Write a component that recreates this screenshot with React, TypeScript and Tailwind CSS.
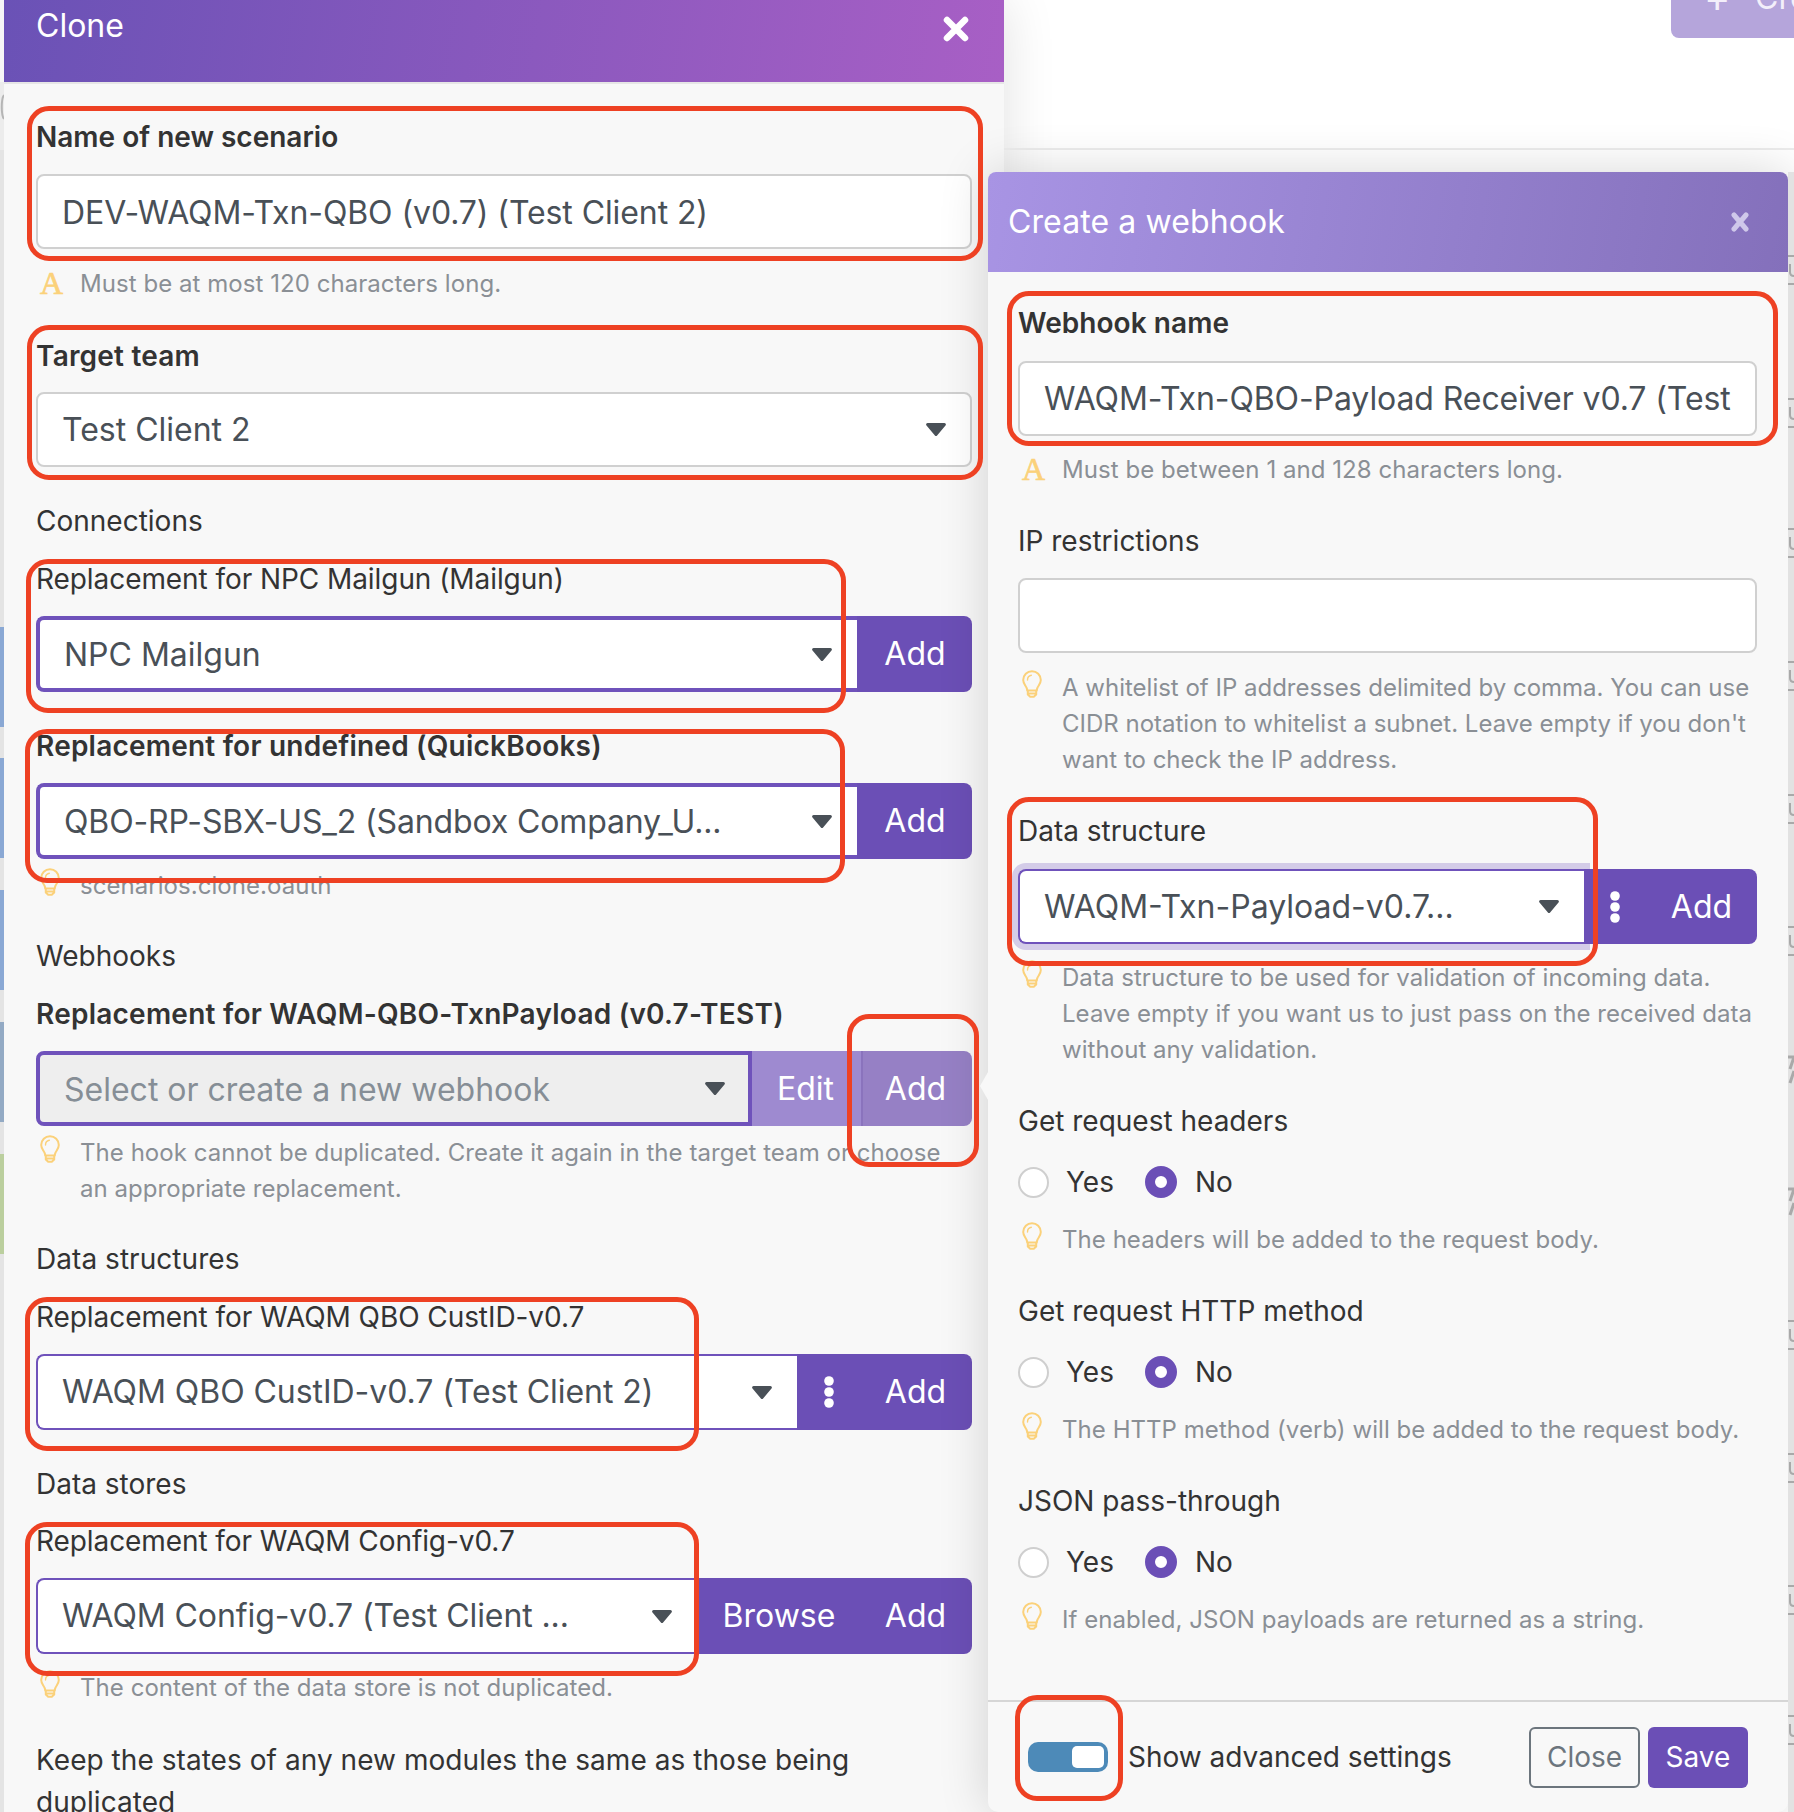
import React from "react";

const Caret = () => (
  <svg width="20" height="13" viewBox="0 0 20 13" className="shrink-0 text-[#495057]">
    <path fill="currentColor" d="M1.6 0h16.8c1.3 0 2 1.6 1.1 2.5l-8.4 9.9c-.6.7-1.6.7-2.2 0L.5 2.500C-.4 1.600.3 0 1.600 0z" />
  </svg>
);

const Dots = () => (
  <svg width="10" height="32" viewBox="0 0 10 32" className="text-white">
    <circle cx="5" cy="5" r="4.800" fill="currentColor" />
    <circle cx="5" cy="16" r="4.800" fill="currentColor" />
    <circle cx="5" cy="27" r="4.800" fill="currentColor" />
  </svg>
);

const Bulb = () => (
  <svg width="20" height="28" viewBox="0 0 20 28" fill="none" stroke="#fbd17a" strokeWidth="2" strokeLinejoin="round" strokeLinecap="round" className="ml-[4px] shrink-0">
    <path d="M10 1.200a8.800 8.800 0 0 0-8.800 8.800c0 3.600 2.400 5.400 3.400 7.900.4 1 .6 1.600.6 2.600h9.600c0-1 .2-1.600.6-2.600 1-2.500 3.400-4.300 3.400-7.900A8.800 8.800 0 0 0 10 1.200z" />
    <path d="M5.800 20.800v3.800l2.400 2.200h3.600l2.400-2.200v-3.800M5.800 23.500h8.400" />
    <path d="M5.500 10c0-2.600 1.700-4.300 3.800-4.700" strokeWidth="1.400" />
  </svg>
);

const Warn = () => (
  <span className="-mt-[1px] ml-[4px] w-[24px] shrink-0 font-['Liberation_Serif',serif] text-[32px] leading-[36px] text-[#fbd17a] [-webkit-text-stroke:0.7px_#fbd17a]">A</span>
);

const Hint = ({ warn, className, children }: { warn?: boolean; className: string; children: React.ReactNode }) => (
  <div className={`flex text-[24px] leading-[36px] tracking-[0.05px] text-[#8a8f95] ${className}`}>
    <div className="flex w-[44px] shrink-0 items-start">{warn ? <Warn /> : <Bulb />}</div>
    <div>{children}</div>
  </div>
);

const Label = ({ bold, className, children }: { bold?: boolean; className: string; children: React.ReactNode }) => (
  <div className={`text-[28px] leading-[42px] text-[#333] ${bold ? "font-semibold" : "font-normal"} ${className}`}>{children}</div>
);

const Field = ({ value, className }: { value: string; className: string }) => (
  <input
    readOnly
    value={value}
    className={`block h-[75px] w-full rounded-[8px] border-2 border-[#d0d0d0] bg-white pl-[24px] text-[32px] text-[#495057] outline-none ${className}`}
  />
);

const Btn = ({ className, children }: { className: string; children: React.ReactNode }) => (
  <div className={`flex h-full shrink-0 items-center justify-center text-[32px] text-white ${className}`}>{children}</div>
);

const Select = ({ text, className, textClass, caretClass }: { text: string; className: string; textClass: string; caretClass: string }) => (
  <div
    className={`flex h-full min-w-0 flex-1 items-center justify-between rounded-l-[8px] border-[#6f52bb] text-[32px] whitespace-nowrap ${className}`}
  >
    <span className={textClass}>{text}</span>
    <span className={caretClass}>
      <Caret />
    </span>
  </div>
);

const Radios = ({ className }: { className: string }) => (
  <div className={`flex h-[42px] items-center text-[28px] text-[#333] ${className}`}>
    <span className="h-[31px] w-[31px] rounded-full border-2 border-[#cfcfcf] bg-white" />
    <span className="ml-[17px]">Yes</span>
    <span className="ml-[31px] h-[32px] w-[32px] rounded-full border-[10px] border-[#6b4fb6] bg-white" />
    <span className="ml-[18px]">No</span>
  </div>
);

const UMark = () => (
  <svg width="6" height="30" viewBox="0 0 6 30" fill="none" stroke="#a9a9a9" strokeWidth="2">
    <path d="M0 1h6M0 29h6M2 9v8c0 3 2 4 4 4" />
  </svg>
);

const BoltMark = () => (
  <svg width="6" height="30" viewBox="0 0 6 30" fill="none" stroke="#a9a9a9" strokeWidth="3">
    <path d="M0 2h6L2 14M6 16L2 28" />
  </svg>
);

const Red = ({ className }: { className: string }) => (
  <div className={`pointer-events-none absolute z-20 rounded-[22px] border-[5px] border-[#ee4123] ${className}`} />
);

export default function App() {
  return (
    <div className="relative flex h-[1812px] w-[1794px] overflow-hidden bg-white font-['Inter',sans-serif]">
      {/* sliver of the page behind, on the left */}
      <div className="relative z-10 flex w-[4px] shrink-0 flex-col bg-[#e4e4e4]">
        <div className="h-[82px] shrink-0 bg-[#f6f6f6]" />
        <div className="h-[68px] shrink-0 bg-[#ececec]">
          <svg width="4" height="26" viewBox="0 0 4 26" fill="none" stroke="#b5b5b5" strokeWidth="2" className="mt-[12px]">
            <path d="M4 1C1 5 1 21 4 25" />
          </svg>
        </div>
        <div className="mt-[477px] h-[100px] shrink-0 bg-[#8aa8d4]" />
        <div className="mt-[31px] h-[100px] shrink-0 bg-[#8aa8d4]" />
        <div className="mt-[32px] h-[100px] shrink-0 bg-[#8aa8d4]" />
        <div className="mt-[32px] h-[100px] shrink-0 bg-[#93aac4]" />
        <div className="mt-[32px] h-[100px] shrink-0 bg-[#bbcf9e]" />
      </div>

      {/* Clone panel */}
      <div className="w-[1000px] shrink-0 bg-[#f8f8f8] shadow-[0_0_50px_rgba(0,0,0,0.12)]">
        <div className="flex h-[84px] items-start justify-between border-b-2 border-[#e6e6e6] bg-[linear-gradient(100deg,#6a52b6,#a85fc5)] bg-clip-padding pl-[32px] pr-[35px] text-white">
          <span className="mt-[2px] text-[32px] leading-[48px]">Clone</span>
          <svg width="26" height="26" viewBox="0 0 26 26" className="mt-[16px]">
            <path d="M4 4L22 22M22 4L4 22" stroke="currentColor" strokeWidth="6.500" strokeLinecap="round" />
          </svg>
        </div>

        <div className="px-[32px] pt-[32px]">
          <Label bold className="">Name of new scenario</Label>
          <Field value="DEV-WAQM-Txn-QBO (v0.7) (Test Client 2)" className="mt-[16px] pt-[2px] pr-[24px] tracking-[-0.09px]" />
          <Hint warn className="mt-[17px]">Must be at most 120 characters long.</Hint>

          <Label bold className="mt-[33px] tracking-[0.2px]">Target team</Label>
          <div className="mt-[15px] flex h-[75px] items-center justify-between rounded-[8px] border-2 border-[#d0d0d0] bg-white pl-[24px] pr-[24px] text-[32px] text-[#495057]">
            <span>Test Client 2</span>
            <Caret />
          </div>

          <Label className="mt-[33px]">Connections</Label>

          <Label className="mt-[16px] tracking-[-0.07px]">Replacement for NPC Mailgun (Mailgun)</Label>
          <div className="mt-[16px] flex h-[76px]">
            <Select text="NPC Mailgun" className="border-4 border-r-0 bg-white pl-[24px] text-[#495057]" textClass="pt-[2px]" caretClass="pr-[25px]" />
            <Btn className="w-[115px] rounded-r-[8px] bg-[#6b4fb6] pl-[1px]">Add</Btn>
          </div>

          <Label bold className="mt-[33px] tracking-[0.22px]">Replacement for undefined (QuickBooks)</Label>
          <div className="mt-[16px] flex h-[76px]">
            <Select text="QBO-RP-SBX-US_2 (Sandbox Company_U..." className="border-4 border-r-0 bg-white pl-[24px] text-[#495057]" textClass="pt-[2px] tracking-[-0.14px]" caretClass="pr-[25px]" />
            <Btn className="w-[115px] rounded-r-[8px] bg-[#6b4fb6] pl-[1px]">Add</Btn>
          </div>
          <Hint className="mt-[9px]">scenarios.clone.oauth</Hint>

          <Label className="mt-[31px]">Webhooks</Label>
          <Label bold className="mt-[16px] tracking-[0.24px]">Replacement for WAQM-QBO-TxnPayload (v0.7-TEST)</Label>
          <div className="mt-[16px] flex h-[75px]">
            <Select text="Select or create a new webhook" className="border-4 bg-[#eeeeee] pl-[24px] text-[#868e96]" textClass="pt-[2px]" caretClass="pr-[23px]" />
            <Btn className="w-[109px] bg-[#9e8ad0] pr-[2px]">Edit</Btn>
            <Btn className="w-[111px] rounded-r-[8px] border-l-2 border-[#8a73bd] bg-[#9680c5] pr-[4px]">Add</Btn>
          </div>
          <Hint className="mt-[9px]">
            The hook cannot be duplicated. Create it again in the target team or choose
            <br />
            an appropriate replacement.
          </Hint>

          <Label className="mt-[31px] tracking-[0.05px]">Data structures</Label>
          <Label className="mt-[16px] tracking-[-0.07px]">Replacement for WAQM QBO CustID-v0.7</Label>
          <div className="mt-[16px] flex h-[76px]">
            <Select text="WAQM QBO CustID-v0.7 (Test Client 2)" className="border-2 border-r-0 bg-white pl-[24px] text-[#495057]" textClass="tracking-[-0.05px]" caretClass="pr-[25px]" />
            <Btn className="w-[64px] bg-[#6b4fb6]"><Dots /></Btn>
            <Btn className="w-[111px] rounded-r-[8px] bg-[#6b4fb6] pr-[2px]">Add</Btn>
          </div>

          <Label className="mt-[33px]">Data stores</Label>
          <Label className="mt-[15px] tracking-[-0.08px]">Replacement for WAQM Config-v0.7</Label>
          <div className="mt-[16px] flex h-[76px]">
            <Select text="WAQM Config-v0.7 (Test Client ..." className="border-2 border-r-0 bg-white pl-[24px] text-[#495057]" textClass="tracking-[-0.1px]" caretClass="pr-[25px]" />
            <Btn className="w-[164px] bg-[#6b4fb6]">Browse</Btn>
            <Btn className="w-[111px] rounded-r-[8px] bg-[#6b4fb6] pr-[2px]">Add</Btn>
          </div>
          <Hint className="mt-[16px]">The content of the data store is not duplicated.</Hint>

          <Label className="mt-[33px] tracking-[0.05px]">
            Keep the states of any new modules the same as those being
            <br />
            duplicated
          </Label>
        </div>
      </div>

      {/* Right column: page behind, then stacked modal */}
      <div className="relative z-10 -ml-[16px] flex w-[806px] shrink-0 flex-col">
        <div className="h-[172px] shrink-0 pl-[16px]">
          <div className="flex h-[150px] justify-end border-b-2 border-[#ececec]">
            <div className="h-[38px] w-[123px] overflow-hidden rounded-bl-[8px] bg-[#b5a5db]">
              <div className="-mt-[26px] flex items-center whitespace-nowrap pl-[33px] text-[32px] leading-[48px] text-[#f3effa]">
                <span className="w-[51px] shrink-0 text-[40px]">+</span>
                <span className="shrink-0">Create</span>
              </div>
            </div>
          </div>
        </div>

        <div className="flex min-h-0 flex-1">
          <div className="relative flex w-[800px] shrink-0 flex-col rounded-b-[10px] rounded-t-[8px] bg-[#f8f8f8] shadow-[0_0_50px_rgba(0,0,0,0.16)]">
            <div className="absolute -left-[8px] top-[900px] h-[28px] w-[8px] bg-[#f8f8f8] [clip-path:polygon(100%_0,0_50%,100%_100%)]" />

            <div className="flex h-[100px] shrink-0 items-center justify-between rounded-t-[8px] bg-[linear-gradient(100deg,#a894e4,#8470bb)] pl-[20px] pr-[39px] text-white">
              <span className="text-[32px] leading-[48px] tracking-[0.1px]">Create a webhook</span>
              <svg width="18" height="20" viewBox="0 0 18 20" className="text-[#cfc8ea]">
                <path d="M3 3L15 17M15 3L3 17" stroke="currentColor" strokeWidth="5" strokeLinecap="round" />
              </svg>
            </div>

            <div className="min-h-0 flex-1 pl-[30px] pr-[31px] pt-[30px]">
              <Label bold className="tracking-[0.05px]">Webhook name</Label>
              <Field value="WAQM-Txn-QBO-Payload Receiver v0.7 (Test Client 2)" className="mt-[17px] pr-[20px] tracking-[-0.09px]" />
              <Hint warn className="mt-[16px]">Must be between 1 and 128 characters long.</Hint>

              <Label className="mt-[32px]">IP restrictions</Label>
              <Field value="" className="mt-[16px] pr-[24px]" />
              <Hint className="mt-[17px] tracking-[0px]">
                A whitelist of IP addresses delimited by comma. You can use
                <br />
                CIDR notation to whitelist a subnet. Leave empty if you don't
                <br />
                want to check the IP address.
              </Hint>

              <Label className="mt-[32px]">Data structure</Label>
              <div className="relative mt-[17px] flex h-[75px]">
                <Select text="WAQM-Txn-Payload-v0.7..." className="border-2 border-r-0 bg-white pl-[24px] text-[#495057] shadow-[0_0_0_6px_#d4cce8]" textClass="" caretClass="pr-[25px]" />
                <Btn className="relative w-[62px] bg-[#6b4fb6]"><Dots /></Btn>
                <Btn className="relative w-[111px] rounded-r-[8px] bg-[#6b4fb6]">Add</Btn>
              </div>
              <Hint className="mt-[16px]">
                Data structure to be used for validation of incoming data.
                <br />
                Leave empty if you want us to just pass on the received data
                <br />
                without any validation.
              </Hint>

              <Label className="mt-[32px]">Get request headers</Label>
              <Radios className="mt-[19px]" />
              <Hint className="mt-[19px]">The headers will be added to the request body.</Hint>

              <Label className="mt-[32px]">Get request HTTP method</Label>
              <Radios className="mt-[19px]" />
              <Hint className="mt-[19px]">The HTTP method (verb) will be added to the request body.</Hint>

              <Label className="mt-[32px]">JSON pass-through</Label>
              <Radios className="mt-[19px]" />
              <Hint className="mt-[19px]">If enabled, JSON payloads are returned as a string.</Hint>
            </div>

            <div className="flex h-[112px] shrink-0 items-center border-t-2 border-[#d6d6d6] pl-[40px] pr-[40px]">
              <div className="flex h-[30px] w-[80px] items-center justify-end rounded-[10px] bg-[#4d8ab8] pr-[4px]">
                <div className="h-[22px] w-[32px] rounded-[5px] bg-white" />
              </div>
              <span className="ml-[20px] text-[28px] text-[#333]">Show advanced settings</span>
              <div className="ml-auto flex h-[61px] w-[111px] items-center justify-center rounded-[6px] border-2 border-[#6c757d] text-[28px] text-[#6c757d]">
                Close
              </div>
              <div className="ml-[8px] flex h-[61px] w-[100px] items-center justify-center rounded-[6px] bg-[#6b4fb6] text-[28px] text-white">
                Save
              </div>
            </div>
          </div>

          {/* sliver of the page behind, on the right */}
          <div className="z-10 flex w-[6px] shrink-0 flex-col bg-[#e2e2e2] pt-[83px]">
            <div className="h-[143px] shrink-0"><UMark /></div>
            <div className="h-[130px] shrink-0"><UMark /></div>
            <div className="h-[133px] shrink-0"><UMark /></div>
            <div className="h-[133px] shrink-0"><UMark /></div>
            <div className="h-[132px] shrink-0"><UMark /></div>
            <div className="h-[129px] shrink-0"><UMark /></div>
            <div className="h-[132px] shrink-0"><BoltMark /></div>
            <div className="h-[133px] shrink-0"><BoltMark /></div>
            <div className="h-[133px] shrink-0"><UMark /></div>
            <div className="h-[132px] shrink-0"><UMark /></div>
            <div className="h-[130px] shrink-0"><UMark /></div>
            <div className="h-[80px] shrink-0"><UMark /></div>
          </div>
        </div>
      </div>

      {/* hand-drawn annotation rectangles over the screenshot */}
      <Red className="left-[27px] top-[106px] h-[155px] w-[956px]" />
      <Red className="left-[27px] top-[325px] h-[155px] w-[956px]" />
      <Red className="left-[26px] top-[559px] h-[154px] w-[820px]" />
      <Red className="left-[25px] top-[729px] h-[154px] w-[820px]" />
      <Red className="left-[847px] top-[1014px] h-[153px] w-[132px]" />
      <Red className="left-[25px] top-[1297px] h-[154px] w-[674px]" />
      <Red className="left-[25px] top-[1522px] h-[154px] w-[674px]" />
      <Red className="left-[1007px] top-[291px] h-[155px] w-[771px]" />
      <Red className="left-[1007px] top-[797px] h-[169px] w-[591px]" />
      <Red className="left-[1015px] top-[1695px] h-[106px] w-[108px]" />
    </div>
  );
}
